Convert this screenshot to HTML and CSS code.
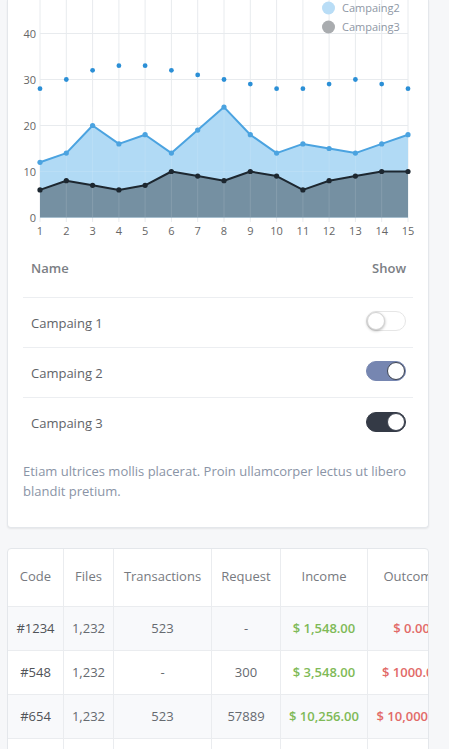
FILE: index.html
```html
<!DOCTYPE html>
<html lang="en">
<head>
<meta charset="utf-8">
<title>Campaigns</title>
<link rel="stylesheet" href="styles.css">
</head>
<body>
<div class="card chart-card">
  <svg class="chart" width="421" height="238" viewBox="8 0 421 238" xmlns="http://www.w3.org/2000/svg">
    <g class="grid" stroke="#e8ebee" stroke-width="1">
      <line x1="40" y1="0" x2="40" y2="222"/>
      <line x1="66.3" y1="0" x2="66.3" y2="222"/>
      <line x1="92.6" y1="0" x2="92.6" y2="222"/>
      <line x1="118.9" y1="0" x2="118.9" y2="222"/>
      <line x1="145.1" y1="0" x2="145.1" y2="222"/>
      <line x1="171.4" y1="0" x2="171.4" y2="222"/>
      <line x1="197.7" y1="0" x2="197.7" y2="222"/>
      <line x1="224" y1="0" x2="224" y2="222"/>
      <line x1="250.3" y1="0" x2="250.3" y2="222"/>
      <line x1="276.6" y1="0" x2="276.6" y2="222"/>
      <line x1="302.9" y1="0" x2="302.9" y2="222"/>
      <line x1="329.1" y1="0" x2="329.1" y2="222"/>
      <line x1="355.4" y1="0" x2="355.4" y2="222"/>
      <line x1="381.7" y1="0" x2="381.7" y2="222"/>
      <line x1="408" y1="0" x2="408" y2="222"/>
      <line x1="40" y1="33.5" x2="408" y2="33.5"/>
      <line x1="40" y1="79.5" x2="408" y2="79.5"/>
      <line x1="40" y1="125.5" x2="408" y2="125.5"/>
      <line x1="40" y1="171.5" x2="408" y2="171.5"/>
    </g>
    <g class="ylabels" font-size="11" fill="#666" text-anchor="end">
      <text x="36" y="37.5">40</text>
      <text x="36" y="83.5">30</text>
      <text x="36" y="129.5">20</text>
      <text x="36" y="175.5">10</text>
      <text x="36" y="221.5">0</text>
    </g>
    <polygon fill="#b1daf5" points="40,217.5 40,162.3 66.3,153.1 92.6,125.5 118.9,143.9 145.1,134.7 171.4,153.1 197.7,130.1 224,107.1 250.3,134.7 276.6,153.1 302.9,143.9 329.1,148.5 355.4,153.1 381.7,143.9 408,134.7 408,217.5"/>
    <polygon fill="#7590a2" points="40,217.5 40,189.9 66.3,180.7 92.6,185.3 118.9,189.9 145.1,185.3 171.4,171.5 197.7,176.1 224,180.7 250.3,171.5 276.6,176.1 302.9,189.9 329.1,180.7 355.4,176.1 381.7,171.5 408,171.5 408,217.5"/>
    <g stroke="#ffffff" stroke-opacity="0.12" stroke-width="1">
      <line x1="66.3" y1="107" x2="66.3" y2="217"/>
      <line x1="92.6" y1="107" x2="92.6" y2="217"/>
      <line x1="118.9" y1="107" x2="118.9" y2="217"/>
      <line x1="145.1" y1="107" x2="145.1" y2="217"/>
      <line x1="171.4" y1="107" x2="171.4" y2="217"/>
      <line x1="197.7" y1="107" x2="197.7" y2="217"/>
      <line x1="224" y1="107" x2="224" y2="217"/>
      <line x1="250.3" y1="107" x2="250.3" y2="217"/>
      <line x1="276.6" y1="107" x2="276.6" y2="217"/>
      <line x1="302.9" y1="107" x2="302.9" y2="217"/>
      <line x1="329.1" y1="107" x2="329.1" y2="217"/>
      <line x1="355.4" y1="107" x2="355.4" y2="217"/>
      <line x1="381.7" y1="107" x2="381.7" y2="217"/>
      <line x1="40" y1="171.5" x2="408" y2="171.5"/>
    </g>
    <polyline fill="none" stroke="#4ba3e0" stroke-width="2" stroke-linejoin="round" points="40,162.3 66.3,153.1 92.6,125.5 118.9,143.9 145.1,134.7 171.4,153.1 197.7,130.1 224,107.1 250.3,134.7 276.6,153.1 302.9,143.9 329.1,148.5 355.4,153.1 381.7,143.9 408,134.7"/>
    <polyline fill="none" stroke="#1d2730" stroke-width="2" stroke-linejoin="round" points="40,189.9 66.3,180.7 92.6,185.3 118.9,189.9 145.1,185.3 171.4,171.5 197.7,176.1 224,180.7 250.3,171.5 276.6,176.1 302.9,189.9 329.1,180.7 355.4,176.1 381.7,171.5 408,171.5"/>
    <g fill="#2b8fd6">
      <circle cx="40" cy="88.7" r="2.4"/>
      <circle cx="66.3" cy="79.5" r="2.4"/>
      <circle cx="92.6" cy="70.3" r="2.4"/>
      <circle cx="118.9" cy="65.7" r="2.4"/>
      <circle cx="145.1" cy="65.7" r="2.4"/>
      <circle cx="171.4" cy="70.3" r="2.4"/>
      <circle cx="197.7" cy="74.9" r="2.4"/>
      <circle cx="224" cy="79.5" r="2.4"/>
      <circle cx="250.3" cy="84.1" r="2.4"/>
      <circle cx="276.6" cy="88.7" r="2.4"/>
      <circle cx="302.9" cy="88.7" r="2.4"/>
      <circle cx="329.1" cy="84.1" r="2.4"/>
      <circle cx="355.4" cy="79.5" r="2.4"/>
      <circle cx="381.7" cy="84.1" r="2.4"/>
      <circle cx="408" cy="88.7" r="2.4"/>
    </g>
    <g fill="#4ba3e0">
      <circle cx="40" cy="162.3" r="2.6"/>
      <circle cx="66.3" cy="153.1" r="2.6"/>
      <circle cx="92.6" cy="125.5" r="2.6"/>
      <circle cx="118.9" cy="143.9" r="2.6"/>
      <circle cx="145.1" cy="134.7" r="2.6"/>
      <circle cx="171.4" cy="153.1" r="2.6"/>
      <circle cx="197.7" cy="130.1" r="2.6"/>
      <circle cx="224" cy="107.1" r="2.6"/>
      <circle cx="250.3" cy="134.7" r="2.6"/>
      <circle cx="276.6" cy="153.1" r="2.6"/>
      <circle cx="302.9" cy="143.9" r="2.6"/>
      <circle cx="329.1" cy="148.5" r="2.6"/>
      <circle cx="355.4" cy="153.1" r="2.6"/>
      <circle cx="381.7" cy="143.9" r="2.6"/>
      <circle cx="408" cy="134.7" r="2.6"/>
    </g>
    <g fill="#1d2730">
      <circle cx="40" cy="189.9" r="2.6"/>
      <circle cx="66.3" cy="180.7" r="2.6"/>
      <circle cx="92.6" cy="185.3" r="2.6"/>
      <circle cx="118.9" cy="189.9" r="2.6"/>
      <circle cx="145.1" cy="185.3" r="2.6"/>
      <circle cx="171.4" cy="171.5" r="2.6"/>
      <circle cx="197.7" cy="176.1" r="2.6"/>
      <circle cx="224" cy="180.7" r="2.6"/>
      <circle cx="250.3" cy="171.5" r="2.6"/>
      <circle cx="276.6" cy="176.1" r="2.6"/>
      <circle cx="302.9" cy="189.9" r="2.6"/>
      <circle cx="329.1" cy="180.7" r="2.6"/>
      <circle cx="355.4" cy="176.1" r="2.6"/>
      <circle cx="381.7" cy="171.5" r="2.6"/>
      <circle cx="408" cy="171.5" r="2.6"/>
    </g>
    <g class="xlabels" font-size="11" fill="#666" text-anchor="middle">
      <text x="40" y="235">1</text>
      <text x="66.3" y="235">2</text>
      <text x="92.6" y="235">3</text>
      <text x="118.9" y="235">4</text>
      <text x="145.1" y="235">5</text>
      <text x="171.4" y="235">6</text>
      <text x="197.7" y="235">7</text>
      <text x="224" y="235">8</text>
      <text x="250.3" y="235">9</text>
      <text x="276.6" y="235">10</text>
      <text x="302.9" y="235">11</text>
      <text x="329.1" y="235">12</text>
      <text x="355.4" y="235">13</text>
      <text x="381.7" y="235">14</text>
      <text x="408" y="235">15</text>
    </g>
    <g class="legend" font-size="11" fill="#8e97a5">
      <circle cx="328.5" cy="8" r="6.5" fill="#b9ddf6"/>
      <text x="342" y="12">Campaing2</text>
      <circle cx="328.5" cy="27" r="6.5" fill="#a9acaf"/>
      <text x="342" y="31">Campaing3</text>
    </g>
  </svg>

  <div class="campaigns">
    <div class="c-head">
      <span>Name</span>
      <span>Show</span>
    </div>
    <div class="c-row">
      <span>Campaing 1</span>
      <span class="switch"><span class="knob"></span></span>
    </div>
    <div class="c-row">
      <span>Campaing 2</span>
      <span class="switch on-blue"><span class="knob"></span></span>
    </div>
    <div class="c-row">
      <span>Campaing 3</span>
      <span class="switch on-dark"><span class="knob"></span></span>
    </div>
  </div>
  <p class="note">Etiam ultrices mollis placerat. Proin ullamcorper lectus ut libero blandit pretium.</p>
</div>

<div class="card table-card">
  <table class="data">
    <thead>
      <tr>
        <th class="w-code">Code</th>
        <th class="w-files">Files</th>
        <th class="w-trans">Transactions</th>
        <th class="w-req">Request</th>
        <th class="w-inc">Income</th>
        <th class="w-out">Outcome</th>
      </tr>
    </thead>
    <tbody>
      <tr class="stripe">
        <td class="code">#1234</td>
        <td>1,232</td>
        <td>523</td>
        <td>-</td>
        <td class="inc">$ 1,548.00</td>
        <td class="out">$ 0.00</td>
      </tr>
      <tr>
        <td class="code">#548</td>
        <td>1,232</td>
        <td>-</td>
        <td>300</td>
        <td class="inc">$ 3,548.00</td>
        <td class="out">$ 1000.00</td>
      </tr>
      <tr class="stripe">
        <td class="code">#654</td>
        <td>1,232</td>
        <td>523</td>
        <td>57889</td>
        <td class="inc">$ 10,256.00</td>
        <td class="out">$ 10,000.00</td>
      </tr>
      <tr>
        <td class="code">#987</td>
        <td>1,232</td>
        <td>523</td>
        <td>-</td>
        <td class="inc">$ 2,548.00</td>
        <td class="out">$ 0.00</td>
      </tr>
    </tbody>
  </table>
</div>
</body>
</html>
```

FILE: styles.css
```css
* { box-sizing: border-box; }

html, body {
  margin: 0;
  padding: 0;
  background: #f6f7f9;
  font-family: "Open Sans", "Liberation Sans", sans-serif;
}

.card {
  width: 422px;
  margin-left: 7px;
  background: #ffffff;
  border: 1px solid #e4e7eb;
}

.chart-card {
  border-top: none;
  border-radius: 0 0 4px 4px;
  box-shadow: 0 1px 2px rgba(0, 0, 0, 0.07);
  padding-bottom: 26px;
}

.chart {
  display: block;
  font-family: "Open Sans", "Liberation Sans", sans-serif;
}

.campaigns {
  padding: 0 15px;
}

.c-head,
.c-row {
  display: flex;
  align-items: center;
  justify-content: space-between;
  padding: 0 7px 0 8px;
  font-size: 13px;
}

.c-head {
  height: 60px;
  border-bottom: 1px solid #eceef1;
  color: #7b7e84;
  font-weight: 600;
}

.c-row {
  height: 50px;
  border-bottom: 1px solid #eceef1;
  color: #5f6368;
}

.c-row:last-child {
  border-bottom: none;
}

.switch {
  position: relative;
  display: block;
  width: 40px;
  height: 20px;
  border-radius: 10px;
  background: #ffffff;
  border: 1px solid #e6e6e6;
  margin-bottom: 3px;
}

.switch .knob {
  position: absolute;
  top: 0;
  left: 0;
  width: 18px;
  height: 18px;
  border-radius: 50%;
  background: #ffffff;
  border: 1px solid #d4d4d4;
  box-shadow: 0 1px 3px rgba(0, 0, 0, 0.3);
}

.switch.on-blue {
  background: #7686b1;
  border-color: #7686b1;
}

.switch.on-dark {
  background: #343a46;
  border-color: #343a46;
}

.switch.on-blue .knob,
.switch.on-dark .knob {
  left: auto;
  right: 0;
  border-color: #3d4350;
  box-shadow: none;
}

.note {
  margin: 13px 0 0;
  padding: 0 15px;
  font-size: 13px;
  line-height: 20px;
  color: #8a94a6;
}

.table-card {
  margin-top: 20px;
  border-radius: 4px;
  overflow: hidden;
}

.data {
  table-layout: fixed;
  width: 448px;
  border-collapse: separate;
  border-spacing: 0;
  font-size: 13px;
  line-height: 20px;
  text-align: center;
}

.data th,
.data td {
  border-right: 1px solid #eaecef;
  border-bottom: 1px solid #eaecef;
  white-space: nowrap;
  overflow: hidden;
}

.data th {
  padding: 17px 0 20px;
  font-weight: 400;
  color: #777a80;
}

.data td {
  padding: 11px 0 12px;
  color: #666a70;
}

.w-code { width: 56px; }
.w-files { width: 50px; }
.w-trans { width: 98px; }
.w-req { width: 69px; }
.w-inc { width: 87px; }
.w-out { width: 88px; }

.data tr.stripe td {
  background: #f8f9fb;
}

.data td.code {
  color: #505358;
}

.data td.inc {
  color: #7fba57;
  font-weight: 600;
}

.data td.out {
  color: #e26a68;
  font-weight: 600;
}
```
